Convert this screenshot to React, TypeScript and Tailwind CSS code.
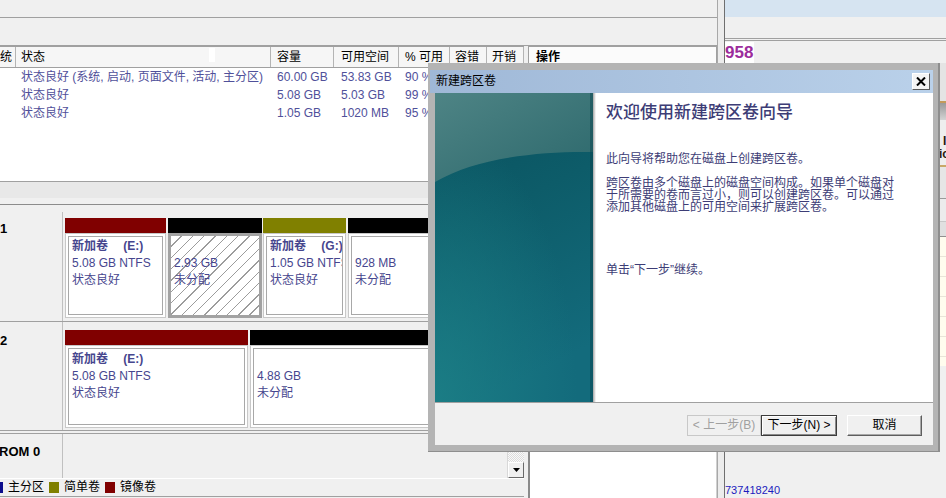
import React from "react";

const cols = [
  { w: "w-[16px]", label: "统", pl: "pl-0" },
  { w: "w-[255px]", label: "状态", pl: "pl-[5px]" },
  { w: "w-[63px]", label: "容量", pl: "pl-[6px]" },
  { w: "w-[65px]", label: "可用空间", pl: "pl-[7px]" },
  { w: "w-[51px]", label: "% 可用", pl: "pl-[6px]" },
  { w: "w-[37px]", label: "容错", pl: "pl-[5px]" },
  { w: "w-[37px]", label: "开销", pl: "pl-[5px]" },
];

const rows = [
  ["", "状态良好 (系统, 启动, 页面文件, 活动, 主分区)", "60.00 GB", "53.83 GB", "90 %", "", ""],
  ["", "状态良好", "5.08 GB", "5.03 GB", "99 %", "", ""],
  ["", "状态良好", "1.05 GB", "1020 MB", "95 %", "", ""],
];

type PartProps = {
  w: string;
  bar: string;
  name?: string;
  size: string;
  status: string;
  sel?: boolean;
  pt: string;
};

const Part = ({ w, bar, name, size, status, sel, pt }: PartProps) => {
  const text = (
    <div className={`${pt} pl-[3px] leading-[17px] whitespace-nowrap overflow-hidden text-[#46468e]`}>
      <div className="h-[17px] font-bold">{name}</div>
      <div>{size}</div>
      <div>{status}</div>
    </div>
  );
  return (
    <div className={`${w} flex flex-col`}>
      <div className={`h-[15px] shrink-0 ${bar}`} />
      {sel ? (
        <div className="flex-1 border-[3px] border-[#a2a2a2] bg-[repeating-linear-gradient(135deg,#ffffff_0px,#ffffff_7px,#9c9c9c_7px,#9c9c9c_8px)] overflow-hidden">
          {text}
        </div>
      ) : (
        <div className="flex-1 border border-[#c8c8c8] bg-white p-[2px]">
          <div className="h-full border border-[#a8a8a8] overflow-hidden">{text}</div>
        </div>
      )}
    </div>
  );
};

const LegendItem = ({ color, label, extra }: { color: string; label: string; extra?: string }) => (
  <div className="flex items-center">
    <div className={`w-[10px] h-[11px] ${color} ${extra ?? ""}`} />
    <span className="ml-[5px]">{label}</span>
  </div>
);

const LeftWindow = () => (
  <div className="w-[718px] h-full flex flex-col border-r border-[#a8a8a8]">
    <div className="h-[18px] shrink-0 border-b border-[#a0a0a0]" />
    <div className="h-[28px] shrink-0 border-b border-[#a0a0a0]" />
    <div className="flex flex-1 min-h-0">
      <div className="w-[524px] flex flex-col">
        {/* list header */}
        <div className="h-[22px] shrink-0 flex border-y border-[#a0a0a0] bg-[#f6f6f6]">
          {cols.map((c, i) => (
            <div
              key={i}
              className={`${c.w} ${c.pl} relative flex items-center whitespace-nowrap overflow-hidden border-r border-[#b4b4b4]`}
            >
              {c.label}
              {i === 1 && <div className="absolute left-[193px] top-[1px] w-[6px] h-[14px] bg-white" />}
            </div>
          ))}
        </div>
        {/* list body */}
        <div className="h-[113px] shrink-0 bg-white text-[#50509a]">
          {rows.map((r, ri) => (
            <div key={ri} className="h-[18px] flex items-center">
              {r.map((cell, ci) => (
                <div key={ci} className={`${cols[ci].w} ${cols[ci].pl} whitespace-nowrap overflow-hidden`}>
                  {cell}
                </div>
              ))}
            </div>
          ))}
        </div>
        <div className="h-[17px] shrink-0 border-t border-[#a0a0a0] bg-[#e8e8e8]" />
        <div className="h-[6px] shrink-0" />
        {/* graphical view */}
        <div className="h-[274px] shrink-0 border-t border-[#8c8c8c] flex">
          <div className="flex-1 flex flex-col pt-[7px]">
            <div className="h-[110px] flex border-b border-[#a0a0a0]">
              <div className="w-[63px] border-r border-[#c0c0c0] pt-[9px] font-bold text-[13px]">1</div>
              <div className="flex-1 flex pl-[2px] pt-[6px] pb-[3px] overflow-hidden">
                <div className="mr-[2px] flex">
                  <Part w="w-[101px]" bar="bg-[#800000]" name={"新加卷\u3000 (E:)"} size="5.08 GB NTFS" status="状态良好" pt="pt-[1px]" />
                </div>
                <div className="mr-[1px] flex">
                  <Part w="w-[94px]" bar="bg-black" size="2.93 GB" status="未分配" sel pt="pt-[2px]" />
                </div>
                <div className="mr-[2px] flex">
                  <Part w="w-[83px]" bar="bg-[#808000]" name={"新加卷\u3000 (G:)"} size="1.05 GB NTFS" status="状态良好" pt="pt-[1px]" />
                </div>
                <Part w="flex-1" bar="bg-black" size="928 MB" status="未分配" pt="pt-[1px]" />
              </div>
            </div>
            <div className="h-[109px] flex border-b border-[#a0a0a0]">
              <div className="w-[63px] border-r border-[#c0c0c0] pt-[11px] font-bold text-[13px]">2</div>
              <div className="flex-1 flex pl-[2px] pt-[8px] pb-[2px] overflow-hidden">
                <div className="mr-[2px] flex">
                  <Part w="w-[183px]" bar="bg-[#800000]" name={"新加卷\u3000 (E:)"} size="5.08 GB NTFS" status="状态良好" pt="pt-[2px]" />
                </div>
                <Part w="flex-1" bar="bg-black" size="4.88 GB" status="未分配" pt="pt-[2px]" />
              </div>
            </div>
            <div className="h-[3px] border-b border-[#a0a0a0]" />
            <div className="flex-1 flex">
              <div className="w-[63px] border-r border-[#c0c0c0] pt-[10px] font-bold text-[13px] whitespace-nowrap overflow-hidden">
                <span className="-ml-[1px]">ROM 0</span>
              </div>
              <div className="flex-1" />
            </div>
          </div>
          <div className="w-[17px] flex flex-col border-l border-[#d8d8d8]">
            <div className="flex-1 bg-[repeating-conic-gradient(#dcdcdc_0%_25%,#fafafa_0%_50%)] bg-[length:2px_2px]" />
            <div className="h-[16px] flex items-center justify-center bg-[#f0f0f0] border border-t-white border-l-white border-r-[#6a6a6a] border-b-[#6a6a6a]">
              <svg width="7" height="4" viewBox="0 0 7 4">
                <path d="M0 0H7L3.5 4Z" fill="#000" />
              </svg>
            </div>
          </div>
        </div>
        {/* legend */}
        <div className="h-[19px] shrink-0 flex items-center gap-[5px] border-t border-white border-b border-b-[#a0a0a0]">
          <LegendItem color="bg-[#0c0c8c]" label="主分区" extra="-ml-[7px]" />
          <LegendItem color="bg-[#808000]" label="简单卷" />
          <LegendItem color="bg-[#800000]" label="镜像卷" />
        </div>
      </div>
      <div className="w-[4px]" />
      <div className="w-[189px] flex flex-col">
        <div className="h-[22px] shrink-0 flex items-center pl-[7px] font-bold border border-[#a0a0a0] bg-[#fbfbfb]">
          操作
        </div>
        <div className="flex-1 bg-white border-l-2 border-[#8a8a8a] border-r border-r-[#d0d0d0]" />
      </div>
    </div>
  </div>
);

const RightWindow = () => (
  <div className="flex-1 h-full flex flex-col">
    <div className="h-[17px] shrink-0 bg-[#d6e4f1]" />
    <div className="h-[21px] shrink-0 bg-[#f0f0f0]" />
    <div className="h-[3px] shrink-0 border-y border-[#a0a0a0]" />
    <div className="h-[22px] shrink-0 flex items-center">
      <span className="bg-white pr-[1px] text-[17px] leading-[21px] font-bold text-[#9c2c9c]">958</span>
    </div>
    <div className="flex-1 flex">
      <div className="flex-1 flex flex-col justify-end">
        <div className="text-[11px] leading-[13px] mb-[1px] text-[#1c1cbe]">737418240</div>
      </div>
      <div className="w-[6px] flex flex-col overflow-hidden">
        <div className="h-[38px] bg-[#e4e4e4]" />
        <div className="h-[2px] bg-[#c49a5a]" />
        <div className="h-[17px] bg-gradient-to-b from-[#999999] to-[#d4d4d4]" />
        <div className="h-[45px] bg-[#eeeeee] pt-[15px] text-[12px] leading-[13px] font-bold whitespace-nowrap text-[#2a1a10]">
          <div className="pl-[3px]">I</div>
          <div className="-ml-[1px]">io</div>
        </div>
        <div className="h-[2px] bg-[#c8a868]" />
        <div className="h-[31px] bg-[#e6e6e6]" />
        <div className="h-px bg-[#9a9a9a]" />
        <div className="h-[23px] bg-[#ececec] border-b border-[#c8c8c8]" />
        <div className="h-[15px] bg-[#e0e0e0] border-b border-[#909090]" />
        <div className="h-[129px] bg-[#fffcee] bg-[repeating-linear-gradient(180deg,#fffcee_0px,#fffcee_19px,#e8e4d8_19px,#e8e4d8_20px)]" />
        <div className="flex-1 bg-[#f0f0f0]" />
      </div>
    </div>
  </div>
);

const WizardArt = () => (
  <svg width="158" height="309" viewBox="0 0 158 309" className="shrink-0 block">
    <defs>
      <linearGradient id="artBase" x1="0" y1="0" x2="0.25" y2="1">
        <stop offset="0" stopColor="#09505d" />
        <stop offset="0.45" stopColor="#0d5c69" />
        <stop offset="1" stopColor="#136b7c" />
      </linearGradient>
      <radialGradient id="artGlow" cx="0" cy="1" r="0.9">
        <stop offset="0" stopColor="#1c7f86" stopOpacity="0.9" />
        <stop offset="1" stopColor="#1c7f86" stopOpacity="0" />
      </radialGradient>
      <linearGradient id="artTop" x1="0" y1="0" x2="1" y2="1">
        <stop offset="0" stopColor="#4e8485" />
        <stop offset="1" stopColor="#2c686c" />
      </linearGradient>
    </defs>
    <rect width="158" height="309" fill="url(#artBase)" />
    <rect width="158" height="309" fill="url(#artGlow)" />
    <path d="M0 0H158V59C108 58 42 64 0 89Z" fill="url(#artTop)" />
    <rect x="155" width="3" height="309" fill="#08434d" opacity="0.45" />
  </svg>
);

const Dialog = () => (
  <div className="absolute left-[428px] top-[63px] w-[512px] h-[389px] bg-[#b4b4b4] border-r-2 border-b border-[#8e8e8e] pl-[2px] pr-[5px] pt-[7px] flex flex-col">
    <div className="h-[23px] shrink-0 flex items-center justify-between bg-gradient-to-r from-[#9fb8d7] to-[#bad1ea] pl-[6px] pr-[3px] text-black">
      <span>新建跨区卷</span>
      <div className="w-[18px] h-[17px] flex items-center justify-center bg-[#f4f4f4] border border-t-white border-l-white border-r-[#5a5a5a] border-b-[#5a5a5a]">
        <svg width="10" height="9" viewBox="0 0 10 9">
          <path d="M1 0.5L9 8.5M9 0.5L1 8.5" stroke="#000" strokeWidth="2" />
        </svg>
      </div>
    </div>
    <div className="ml-[5px] h-[352px] flex flex-col">
      <div className="h-[309px] flex">
        <WizardArt />
        <div className="w-[3px] bg-gradient-to-r from-[#a6a6a6] to-white" />
        <div className="flex-1 bg-white pl-[10px] pt-[10px] text-[#3d3d76] whitespace-nowrap">
          <div className="text-[17px] leading-[20px] font-medium">欢迎使用新建跨区卷向导</div>
          <div className="mt-[30px] leading-[12px]">此向导将帮助您在磁盘上创建跨区卷。</div>
          <div className="mt-[12px] leading-[12px]">
            跨区卷由多个磁盘上的磁盘空间构成。如果单个磁盘对
            <br />
            于所需要的卷而言过小，则可以创建跨区卷。可以通过
            <br />
            添加其他磁盘上的可用空间来扩展跨区卷。
          </div>
          <div className="mt-[51px] leading-[12px]">单击“下一步”继续。</div>
        </div>
      </div>
      <div className="h-px bg-[#a0a0a0]" />
      <div className="flex-1 bg-[#f0f0f0] flex justify-end items-start pt-[12px] pr-[11px]">
        <div className="w-[74px] h-[21px] flex items-center justify-center border border-[#c8c8c8] text-[#a0a0a0]">
          &lt; 上一步(B)
        </div>
        <div className="w-[76px] h-[21px] flex items-center justify-center border border-[#3c3c3c] shadow-[inset_1px_1px_0_#ffffff,inset_-1px_-1px_0_#8a8a8a] text-black">
          下一步(N) &gt;
        </div>
        <div className="ml-[10px] w-[75px] h-[21px] flex items-center justify-center border border-t-white border-l-white border-r-[#5e5e5e] border-b-[#5e5e5e] shadow-[inset_-1px_-1px_0_#a8a8a8] text-black">
          取消
        </div>
      </div>
    </div>
  </div>
);

export default function App() {
  return (
    <div className="relative w-[946px] h-[498px] overflow-hidden flex bg-[#f0f0f0] text-[12px] leading-[15px] text-black font-['Liberation_Sans','Noto_Sans_CJK_SC',sans-serif]">
      <LeftWindow />
      <div className="w-[6px] bg-[#ececec]" />
      <div className="w-px bg-[#6f6f6f]" />
      <RightWindow />
      <Dialog />
    </div>
  );
}
